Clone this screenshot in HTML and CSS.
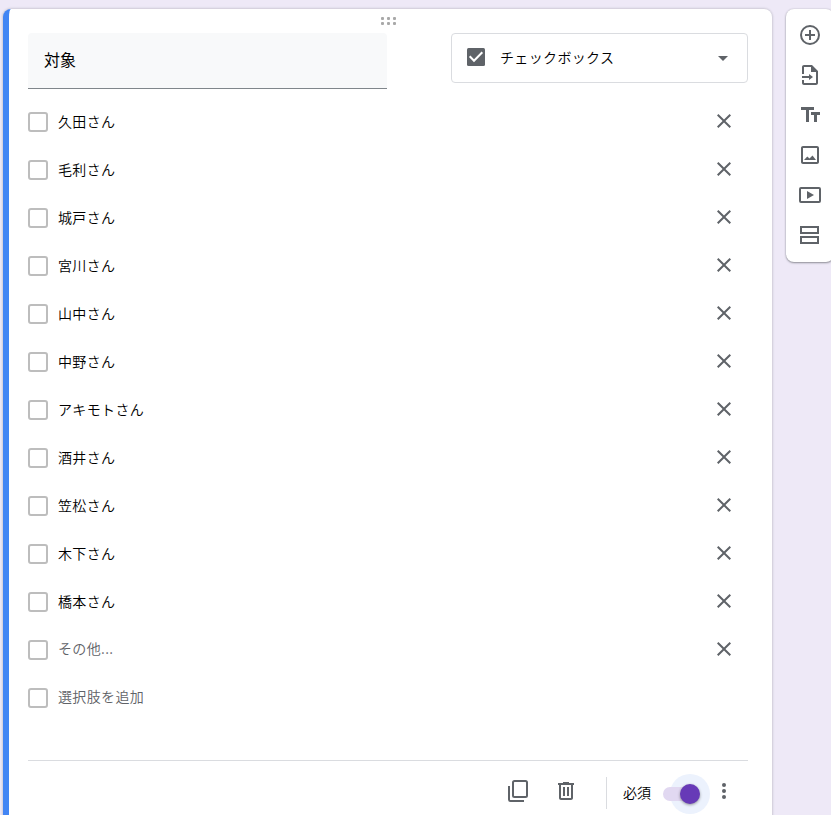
FILE: index.html
```html
<!DOCTYPE html>
<html lang="ja">
<head>
<meta charset="utf-8">
<title>フォーム</title>
<link rel="stylesheet" href="styles.css">
</head>
<body>
<svg class="defs" width="0" height="0">
  <symbol id="close" viewBox="0 0 24 24"><path d="M19 6.41L17.59 5 12 10.59 6.41 5 5 6.41 10.59 12 5 17.59 6.41 19 12 13.41 17.59 19 19 17.59 13.41 12z"/></symbol>
</svg>
<div class="page">
  <main class="card">
    <div class="drag"><i></i><i></i><i></i><i></i><i></i><i></i></div>
    <div class="head">
      <div class="title">対象</div>
      <div class="select">
        <svg class="check" viewBox="0 0 18 18"><rect width="18" height="18" rx="1.500"/><path class="tick" d="M2.700 8.300l4.300 4.400L15.300 4.300"/></svg>
        <span>チェックボックス</span>
        <svg class="arrow" viewBox="0 0 10 5"><path d="M0 0h10L5 5z"/></svg>
      </div>
    </div>
    <ul class="options">
      <li><b></b><span>久田さん</span><svg><use href="#close"/></svg></li>
      <li><b></b><span>毛利さん</span><svg><use href="#close"/></svg></li>
      <li><b></b><span>城戸さん</span><svg><use href="#close"/></svg></li>
      <li><b></b><span>宮川さん</span><svg><use href="#close"/></svg></li>
      <li><b></b><span>山中さん</span><svg><use href="#close"/></svg></li>
      <li><b></b><span>中野さん</span><svg><use href="#close"/></svg></li>
      <li><b></b><span>アキモトさん</span><svg><use href="#close"/></svg></li>
      <li><b></b><span>酒井さん</span><svg><use href="#close"/></svg></li>
      <li><b></b><span>笠松さん</span><svg><use href="#close"/></svg></li>
      <li><b></b><span>木下さん</span><svg><use href="#close"/></svg></li>
      <li><b></b><span>橋本さん</span><svg><use href="#close"/></svg></li>
      <li class="muted"><b></b><span>その他...</span><svg><use href="#close"/></svg></li>
      <li class="muted"><b></b><span>選択肢を追加</span></li>
    </ul>
    <footer class="foot">
      <svg class="copy" viewBox="0 0 20 22"><path class="line" d="M6.500 1h11q1.500 0 1.500 1.500v13q0 1.500-1.500 1.500H6.500q-1.500 0-1.500-1.500v-13Q5 1 6.500 1zM1 6v13.500Q1 21 2.500 21H16"/></svg>
      <svg class="trash" viewBox="0 0 16 18"><path d="M11 1V0H5v1H0v2h1v13c0 1.100.9 2 2 2h10c1.100 0 2-.9 2-2V3h1V1h-5zm2 15H3V3h10v13zM5 5h2v9H5zM9 5h2v9H9z"/></svg>
      <div class="required">
        <span>必須</span>
        <div class="switch"><div class="halo"></div><div class="track"></div><div class="thumb"></div></div>
      </div>
      <svg class="more" viewBox="0 0 4 16"><circle cx="2" cy="2" r="2"/><circle cx="2" cy="8" r="2"/><circle cx="2" cy="14" r="2"/></svg>
    </footer>
  </main>
  <aside class="tools">
    <svg viewBox="0 0 24 24"><circle class="line" cx="12" cy="12" r="9"/><path d="M11 7h2v4h4v2h-4v4h-2v-4H7v-2h4z"/></svg>
    <svg viewBox="0 0 24 24"><path d="M14 2H6c-1.100 0-2 .9-2 2v7h2V4h7v5h5v11H6v-3H4v3c0 1.100.9 2 2 2h12c1.100 0 2-.9 2-2V8l-6-6z"/><path d="M14 3v5h5z"/><path d="M4 13h7v-2l4 3-4 3v-2H4z"/></svg>
    <svg viewBox="0 0 24 24"><path d="M3 4v3h5v12h3V7h5V4H3zM13 9v3h3v7h3v-7h3V9h-9z"/></svg>
    <svg viewBox="0 0 24 24"><path d="M19 5v14H5V5h14m0-2H5c-1.100 0-2 .9-2 2v14c0 1.100.9 2 2 2h14c1.100 0 2-.9 2-2V5c0-1.100-.9-2-2-2z"/><path d="M14.500 12.500l-3 3L9.300 13.500 6 17h12z"/></svg>
    <svg viewBox="0 0 24 24"><rect class="line" x="2" y="5" width="20" height="14" rx="1"/><path d="M9 8v8l7-4z"/></svg>
    <svg viewBox="0 0 24 24"><path class="line" d="M3 4h17v6H3zM3 14h17v6H3z"/></svg>
  </aside>
</div>
</body>
</html>
```
FILE: styles.css
```css
* { box-sizing: border-box; }
body {
  margin: 0;
  height: 815px;
  overflow: hidden;
  background: #eee9f7;
  color: #000;
  font: 350 14px/20px "Noto Sans CJK JP", sans-serif;
  letter-spacing: .35px;
}
svg { display: block; flex: none; fill: #5f6368; }
.defs { position: absolute; }
.line { fill: none; stroke: #5f6368; stroke-width: 2; }
.page { display: flex; align-items: flex-start; gap: 14px; width: 840px; padding: 9px 0 0 3px; }
.card {
  flex: none;
  width: 769px;
  height: 840px;
  padding: 8px 24px 0 19px;
  background: #fff;
  border-left: 6px solid #4285f4;
  border-radius: 8px;
  box-shadow: 0 0 2px 1px rgba(60, 64, 67, .18);
}
.drag {
  display: grid;
  grid-template-columns: repeat(3, 3px);
  align-content: start;
  gap: 2px 3px;
  width: 15px;
  height: 16px;
  margin-left: 353px;
}
.drag i { width: 3px; height: 3px; border-radius: 1px; background: #a9a9a9; }
.head { display: flex; justify-content: space-between; align-items: flex-start; }
.title {
  width: 359px;
  height: 56px;
  padding: 0 16px;
  background: #f8f9fa;
  border-bottom: 1px solid #80868b;
  border-radius: 4px 4px 0 0;
  font-size: 16px;
  font-weight: 400;
  line-height: 52px;
  letter-spacing: 0;
}
.select {
  display: flex;
  align-items: center;
  width: 297px;
  height: 50px;
  padding: 0 19px 0 15px;
  border: 1px solid #dadce0;
  border-radius: 4px;
}
.select span { flex: 1; margin: -2px 0 0 15px; }
.check { width: 18px; height: 18px; margin-top: -2px; }
.tick { fill: none; stroke: #fff; stroke-width: 2; }
.arrow { width: 10px; height: 5px; margin-top: 1px; }
.options { margin: 8px 0 0; padding: 0; list-style: none; }
.options li { display: flex; align-items: center; height: 48px; padding-right: 12px; }
.options b { width: 20px; height: 20px; margin-top: 2px; border: 2px solid #bdbdbd; border-radius: 3px; }
.options span { flex: 1; margin-left: 10px; }
.options svg { width: 24px; height: 24px; }
.options .muted { color: #5f6368; }
.options .muted span { margin-top: -2px; }
.foot { display: flex; align-items: flex-start; height: 70px; margin-top: 39px; border-top: 1px solid #dadce0; }
.copy { width: 20px; height: 22px; margin: 19px 0 0 480px; }
.trash { width: 16px; height: 18px; margin: 21px 0 0 30px; }
.required {
  display: flex;
  align-items: center;
  height: 32px;
  margin: 16px 0 0 32px;
  padding-left: 16px;
  border-left: 1px solid #dadce0;
  letter-spacing: 0;
}
.required span { margin-top: -2px; }
.switch { position: relative; width: 36px; height: 14px; margin: 2px 0 0 12px; }
.halo, .track, .thumb { position: absolute; border-radius: 50%; }
.halo { top: -13px; right: -11px; width: 40px; height: 40px; background: #ecf2fd; }
.track { inset: 0; border-radius: 7px; background: #e1d8f1; }
.thumb {
  top: -3px;
  right: -1px;
  width: 20px;
  height: 20px;
  background: #673ab7;
  box-shadow: 0 1px 3px rgba(0, 0, 0, .4);
}
.more { width: 4px; height: 16px; margin: 22px 0 0 23px; }
.tools {
  display: flex;
  flex: none;
  flex-direction: column;
  align-items: center;
  gap: 16px;
  width: 48px;
  height: 253px;
  padding-top: 14px;
  background: #fff;
  border-radius: 8px;
  box-shadow: 0 1px 2px rgba(60, 64, 67, .5), 0 0 2px rgba(60, 64, 67, .2);
}
.tools svg { width: 24px; height: 24px; }
```
